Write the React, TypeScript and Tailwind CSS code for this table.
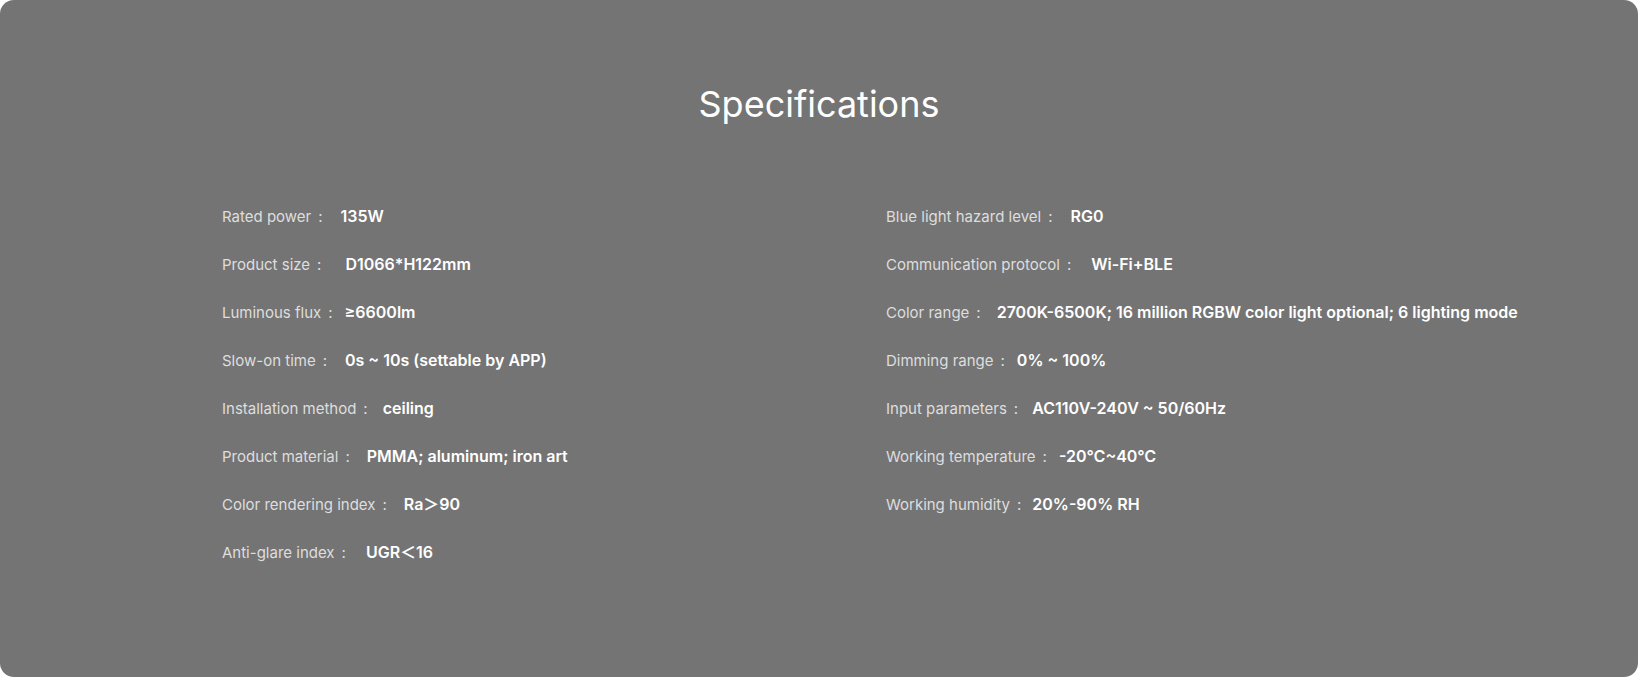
const leftSpecs = [
  { label: "Rated power", value: "135W", gap: "ml-[18px]" },
  { label: "Product size", value: "D1066*H122mm", gap: "ml-[24px]" },
  { label: "Luminous flux", value: "≥6600lm", gap: "ml-[12px]" },
  { label: "Slow-on time", value: "0s ~ 10s (settable by APP)", gap: "ml-[18px]" },
  { label: "Installation method", value: "ceiling", gap: "ml-[15px]" },
  { label: "Product material", value: "PMMA; aluminum; iron art", gap: "ml-[17px]" },
  { label: "Color rendering index", value: "Ra＞90", gap: "ml-[17px]" },
  { label: "Anti-glare index", value: "UGR＜16", gap: "ml-[20px]" },
];

const rightSpecs = [
  { label: "Blue light hazard level", value: "RG0", gap: "ml-[18px]" },
  { label: "Communication protocol", value: "Wi-Fi+BLE", gap: "ml-[20px]" },
  {
    label: "Color range",
    value: "2700K-6500K; 16 million RGBW color light optional; 6 lighting mode",
    gap: "ml-[16px]",
  },
  { label: "Dimming range", value: "0% ~ 100%", gap: "ml-[12px]" },
  { label: "Input parameters", value: "AC110V-240V ~ 50/60Hz", gap: "ml-[14px]" },
  { label: "Working temperature", value: "-20℃~40℃", gap: "ml-[12px]" },
  { label: "Working humidity", value: "20%-90% RH", gap: "ml-[11px]" },
];

type Spec = { label: string; value: string; gap: string };

function SpecRow({ spec }: { spec: Spec }) {
  return (
    <div className="h-12 whitespace-nowrap text-[15px] leading-[48px]">
      <span className="text-[#dedede]">{spec.label}</span>
      <span className="ml-[7px] text-[#dedede]">:</span>
      <span className={`${spec.gap} text-[16px] font-semibold text-white`}>{spec.value}</span>
    </div>
  );
}

export default function App() {
  return (
    <div className="h-[677px] w-full bg-white">
      <div
        className="flex h-full w-full flex-col rounded-[14px] bg-[#747474] pt-[86px]"
        style={{ fontFamily: "Inter, 'Noto Sans CJK SC', 'Noto Sans', sans-serif" }}
      >
        <h1 className="text-center text-[36px] font-normal leading-none text-white">Specifications</h1>

        <div className="mt-[70px] grid grid-cols-[664px_1fr] pl-[222px]">
          <div className="flex flex-col">
            {leftSpecs.map((spec) => (
              <SpecRow key={spec.label} spec={spec} />
            ))}
          </div>
          <div className="flex flex-col">
            {rightSpecs.map((spec) => (
              <SpecRow key={spec.label} spec={spec} />
            ))}
          </div>
        </div>
      </div>
    </div>
  );
}
